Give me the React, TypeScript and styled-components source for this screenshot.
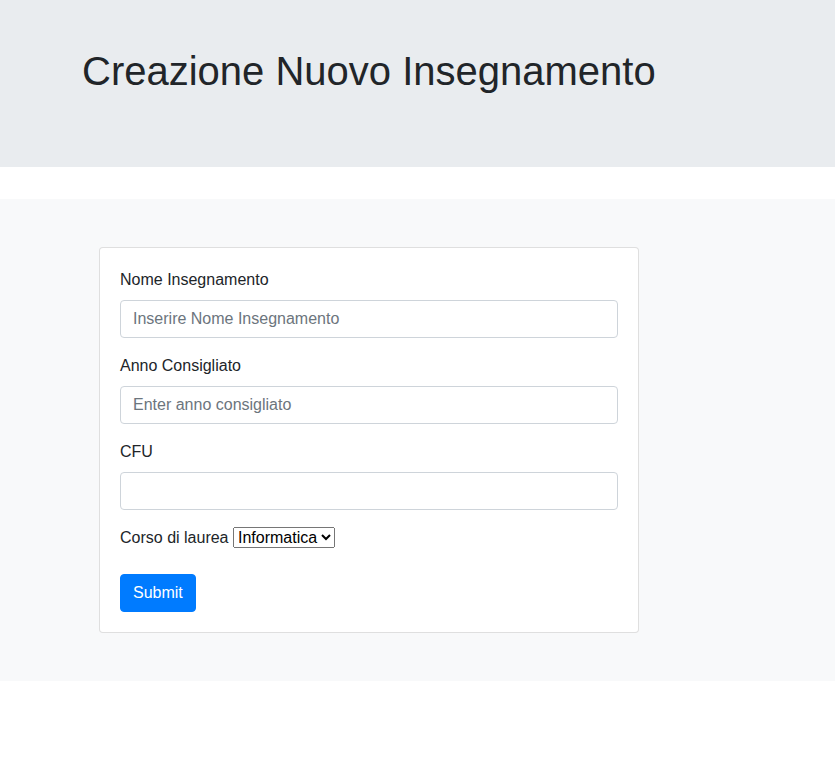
import React from "react";
import styled, { createGlobalStyle } from "styled-components";

const Global = createGlobalStyle`
  *, *::before, *::after { box-sizing: border-box; }
  body {
    margin: 0;
    font-family: "Liberation Sans", Arial, sans-serif;
    font-size: 16px;
    line-height: 1.5;
    color: #212529;
    background: #fff;
  }
`;

const Jumbotron = styled.header`
  background: #e9ecef;
  padding: 47px 0 64px 82px;
  margin-bottom: 32px;
`;

const Title = styled.h1`
  margin: 0 0 8px;
  font-size: 40px;
  line-height: 1.2;
  font-weight: 400;
`;

const Section = styled.section`
  background: #f8f9fa;
  padding: 48px 0 48px 99px;
`;

const Card = styled.form`
  width: 540px;
  background: #fff;
  border: 1px solid rgba(0, 0, 0, 0.125);
  border-radius: 4px;
  padding: 20px;
  display: flex;
  flex-direction: column;
  align-items: flex-start;
`;

const Group = styled.div`
  width: 100%;
  margin-bottom: 16px;
`;

const Label = styled.label`
  display: inline-block;
  margin-bottom: 8px;
`;

const Input = styled.input`
  display: block;
  width: 100%;
  height: 38px;
  padding: 6px 12px;
  font: inherit;
  font-size: 16px;
  line-height: 1.5;
  color: #495057;
  background: #fff;
  border: 1px solid #ced4da;
  border-radius: 4px;
  margin: 0;
  &::placeholder { color: #6c757d; opacity: 1; }
`;

const Select = styled.select`
  font-family: inherit;
  font-size: inherit;
  margin: 0;
  color: #000;
`;

const Button = styled.button`
  font: inherit;
  font-size: 16px;
  line-height: 1.5;
  color: #fff;
  background: #007bff;
  border: 1px solid #007bff;
  border-radius: 4px;
  padding: 6px 12px;
  cursor: pointer;
  margin: 0;
`;

export default function App() {
  return (
    <>
      <Global />
      <Jumbotron>
        <Title>Creazione Nuovo Insegnamento</Title>
      </Jumbotron>
      <Section>
        <Card onSubmit={(e) => e.preventDefault()}>
          <Group>
            <Label htmlFor="nome">Nome Insegnamento</Label>
            <Input id="nome" type="text" placeholder="Inserire Nome Insegnamento" />
          </Group>
          <Group>
            <Label htmlFor="anno">Anno Consigliato</Label>
            <Input id="anno" type="text" placeholder="Enter anno consigliato" />
          </Group>
          <Group>
            <Label htmlFor="cfu">CFU</Label>
            <Input id="cfu" type="text" />
          </Group>
          <Group>
            <Label htmlFor="corso">
              Corso di laurea{" "}
              <Select id="corso" defaultValue="Informatica">
                <option>Informatica</option>
              </Select>
            </Label>
          </Group>
          <Button type="submit">Submit</Button>
        </Card>
      </Section>
    </>
  );
}
